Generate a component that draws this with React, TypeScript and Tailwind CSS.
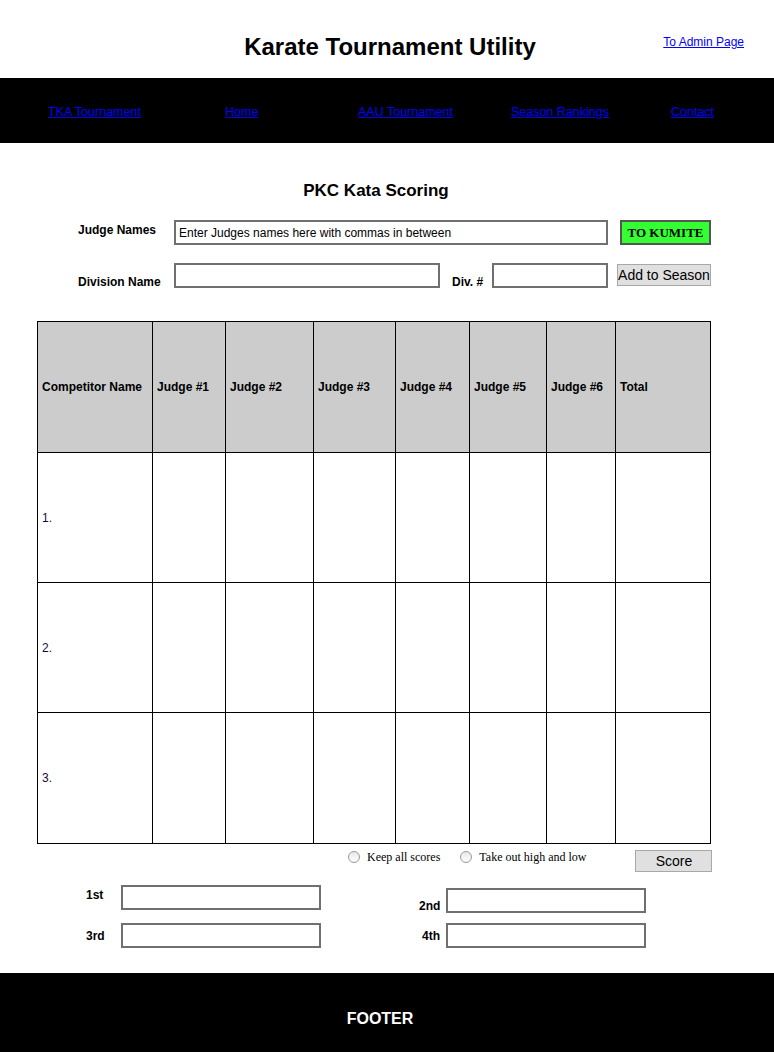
import React from "react";

const navLinks = [
  { label: "TKA Tournament", w: "w-[177px]" },
  { label: "Home", w: "w-[133px]" },
  { label: "AAU Tournament", w: "w-[153px]" },
  { label: "Season Rankings", w: "w-[160px]" },
  { label: "Contact", w: "w-auto" },
];

const headers = ["Competitor Name", "Judge #1", "Judge #2", "Judge #3", "Judge #4", "Judge #5", "Judge #6", "Total"];
const cols = "grid grid-cols-[115px_73px_88px_82px_74px_77px_69px_94px]";

function Box({ w, h = "h-[25px]" }: { w: string; h?: string }) {
  return <div className={`${w} ${h} border-2 border-[#707070] bg-white`} />;
}

function Radio({ label }: { label: string }) {
  return (
    <label className="flex items-center gap-[7px] text-[12px] text-black font-['Liberation_Serif',serif]">
      <span className="w-[12px] h-[12px] rounded-full border border-[#9a9a9a] bg-gradient-to-b from-[#e8e8e8] to-white" />
      {label}
    </label>
  );
}

export default function App() {
  return (
    <div className="w-[774px] min-h-[1052px] bg-white font-['Liberation_Sans',Arial,sans-serif] flex flex-col">
      {/* header */}
      <header className="h-[78px] grid grid-cols-[1fr_auto_1fr] items-center">
        <div />
        <h1 className="pl-[6px] pt-[16px] text-[24px] font-bold text-black">Karate Tournament Utility</h1>
        <div className="flex justify-end pr-[30px] pt-[6px]">
          <a href="#" className="text-[12px] text-[#0000ff] underline">To Admin Page</a>
        </div>
      </header>

      {/* nav */}
      <nav className="h-[65px] bg-black flex items-center pl-[48px] pt-[1px]">
        {navLinks.map((l) => (
          <div key={l.label} className={l.w}>
            <a href="#" className="text-[12.5px] text-[#0000ff] underline">{l.label}</a>
          </div>
        ))}
      </nav>

      {/* main */}
      <main className="flex-1 pt-[38px]">
        <h2 className="text-center pr-[22px] text-[17px] font-bold text-black leading-[20px]">PKC Kata Scoring</h2>

        <div className="mt-[19px] pl-[78px] flex items-start">
          <div className="w-[96px] pt-[1px] text-[12px] font-bold">Judge Names</div>
          <div className="w-[434px] h-[25px] border-2 border-[#707070] flex items-center px-[3px] text-[12px]">
            Enter Judges names here with commas in between
          </div>
          <button className="ml-[12px] w-[91px] h-[25px] bg-[#33ff33] border-2 border-[#555] font-['Liberation_Serif',serif] font-bold text-[13px] text-black">
            TO KUMITE
          </button>
        </div>

        <div className="mt-[18px] pl-[78px] flex items-end">
          <div className="w-[96px] text-[12px] leading-none font-bold">Division Name</div>
          <Box w="w-[266px]" />
          <div className="ml-[12px] w-[40px] text-[12px] leading-none font-bold">Div. #</div>
          <Box w="w-[116px]" />
          <button className="ml-[9px] mb-[2px] w-[94px] h-[22px] bg-[#e0e0e0] border border-[#a8a8a8] text-[14px] text-black">
            Add to Season
          </button>
        </div>

        {/* table */}
        <div className="mt-[33px] ml-[37px] w-[674px] border border-black">
          <div className={`${cols} bg-[#cccccc] border-b border-black h-[131px]`}>
            {headers.map((h, i) => (
              <div
                key={h}
                className={`flex items-center pl-[4px] text-[12px] font-bold text-black ${i < headers.length - 1 ? "border-r border-black" : ""}`}
              >
                {h}
              </div>
            ))}
          </div>
          {[1, 2, 3].map((n) => (
            <div key={n} className={`${cols} h-[130px] ${n < 3 ? "border-b border-black" : ""}`}>
              {headers.map((h, i) => (
                <div
                  key={h}
                  className={`flex items-center pl-[4px] text-[12px] text-[#1a0a3a] ${i < headers.length - 1 ? "border-r border-black" : ""}`}
                >
                  {i === 0 ? `${n}.` : ""}
                </div>
              ))}
            </div>
          ))}
        </div>

        <div className="mt-[4px] flex items-start">
          <div className="ml-[348px] flex gap-[20px]">
            <Radio label="Keep all scores" />
            <Radio label="Take out high and low" />
          </div>
          <button className="ml-[49px] mt-[2px] w-[77px] h-[22px] bg-[#e0e0e0] border border-[#a8a8a8] text-[14px] text-black">
            Score
          </button>
        </div>

        <div className="mt-[13px] h-[28px] pl-[86px] flex items-start">
          <div className="w-[35px] pt-[4px] text-[12px] leading-none font-bold">1st</div>
          <Box w="w-[200px]" />
          <div className="ml-[98px] w-[27px] pt-[15px] text-[12px] leading-none font-bold">2nd</div>
          <div className="pt-[3px]">
            <Box w="w-[200px]" />
          </div>
        </div>
        <div className="mt-[10px] pl-[86px] flex items-center">
          <div className="w-[35px] text-[12px] font-bold">3rd</div>
          <Box w="w-[200px]" />
          <div className="ml-[101px] w-[24px] text-[12px] font-bold">4th</div>
          <Box w="w-[200px]" />
        </div>
      </main>

      {/* footer */}
      <footer className="mt-[24px] h-[79px] bg-black flex items-center justify-center pt-[12px] pr-[14px]">
        <span className="text-white font-bold text-[16px]">FOOTER</span>
      </footer>
    </div>
  );
}
